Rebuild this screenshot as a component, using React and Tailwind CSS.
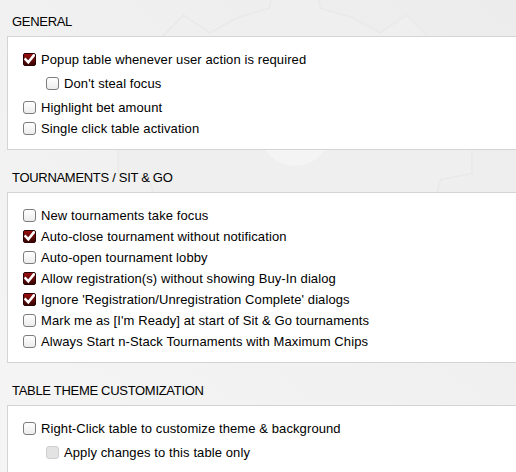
import React from 'react';

const gearPath = (() => {
  const cx = 295, cy = 154, rIn = 148, rOut = 178, teeth = 8;
  const pts = [];
  for (let i = 0; i < teeth; i++) {
    const base = (i * 2 * Math.PI) / teeth - Math.PI / 2;
    const step = (2 * Math.PI) / teeth;
    const angs = [
      [base - step * 0.5, rIn],
      [base - step * 0.22, rIn],
      [base - step * 0.14, rOut],
      [base + step * 0.14, rOut],
      [base + step * 0.22, rIn],
    ];
    angs.forEach(([a, r]) => pts.push([cx + r * Math.cos(a), cy + r * Math.sin(a)]));
  }
  return 'M' + pts.map((p) => p[0].toFixed(1) + ' ' + p[1].toFixed(1)).join(' L') + ' Z';
})();

const Box = ({ checked, disabled }) => {
  if (checked) {
    return (
      <span className="w-[13px] h-[13px] shrink-0 rounded-[2px] bg-gradient-to-b from-[#9b1010] to-[#3a0404] border border-[#2a0000] flex items-center justify-center">
        <svg width="11" height="11" viewBox="0 0 11 11">
          <path d="M1.5 5.3 L4.3 8.2 L9.8 1.4" fill="none" stroke="#ffffff" strokeWidth="2.6" strokeLinecap="square" />
        </svg>
      </span>
    );
  }
  if (disabled) {
    return <span className="w-[13px] h-[13px] shrink-0 rounded-[3px] bg-[#e3e3e3] border border-[#cfcfcf]"></span>;
  }
  return <span className="w-[13px] h-[13px] shrink-0 rounded-[3px] bg-gradient-to-b from-white to-[#ececec] border border-[#7d7d7d]"></span>;
};

const Row = ({ label, checked, disabled, sub }) => (
  <div className={`flex items-center gap-[5px] h-[21px] ${sub ? 'pl-[23px] my-[3px]' : ''}`}>
    <Box checked={checked} disabled={disabled} />
    <span className="whitespace-nowrap tracking-[0.1px]">{label}</span>
  </div>
);

const Section = ({ title, first, children }) => (
  <div>
    <div className={`pl-[12px] leading-[16px] pb-[6px] tracking-[-0.3px] ${first ? 'pt-[14px]' : 'pt-[20px]'}`}>{title}</div>
    <div className="ml-[7px] bg-white border border-r-0 border-[#d4d4d4] pl-[15px] pt-[12px] pb-[10px]">{children}</div>
  </div>
);

export default function App() {
  return (
    <div className="relative w-[516px] h-[472px] overflow-hidden bg-gradient-to-bl from-[#ececec] to-[#f5f5f5] text-[13px] leading-[21px] text-black font-['Liberation_Sans',Arial,sans-serif]">
      {/* faint gear watermark */}
      <svg className="absolute left-0 top-0 pointer-events-none" width="516" height="472">
        <path d={gearPath} fill="#efefef" stroke="#e9e9e9" strokeWidth="1.5" />
        <circle cx="295" cy="130" r="36" fill="#f4f4f4" />
      </svg>
      <div className="relative">
        <Section title="GENERAL" first>
          <Row checked label="Popup table whenever user action is required" />
          <Row sub label="Don't steal focus" />
          <Row label="Highlight bet amount" />
          <Row label="Single click table activation" />
        </Section>
        <Section title="TOURNAMENTS / SIT & GO">
          <Row label="New tournaments take focus" />
          <Row checked label="Auto-close tournament without notification" />
          <Row label="Auto-open tournament lobby" />
          <Row checked label="Allow registration(s) without showing Buy-In dialog" />
          <Row checked label="Ignore 'Registration/Unregistration Complete' dialogs" />
          <Row label="Mark me as [I'm Ready] at start of Sit & Go tournaments" />
          <Row label="Always Start n-Stack Tournaments with Maximum Chips" />
        </Section>
        <Section title="TABLE THEME CUSTOMIZATION">
          <Row label="Right-Click table to customize theme & background" />
          <Row sub disabled label="Apply changes to this table only" />
        </Section>
      </div>
    </div>
  );
}
